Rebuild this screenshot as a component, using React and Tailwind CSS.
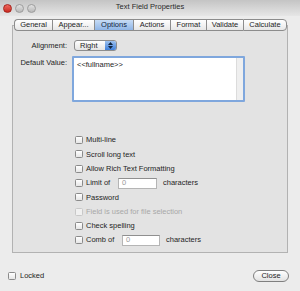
import React from "react";

const tabs = [
  { label: "General", w: "w-[38px]" },
  { label: "Appear...", w: "w-[42px]" },
  { label: "Options", w: "w-[39px]", active: true },
  { label: "Actions", w: "w-[37px]" },
  { label: "Format", w: "w-[36px]" },
  { label: "Validate", w: "w-[37px]" },
  { label: "Calculate", w: "w-[44px]" },
];

const Check = ({ disabled }) => (
  <span
    className={
      "block w-[8px] h-[8px] rounded-[1.5px] border shrink-0 " +
      (disabled
        ? "border-[#c8c8c8] bg-[#f0f0f0]"
        : "border-[#8a8a8a] bg-gradient-to-b from-[#ffffff] to-[#e6e6e6]")
    }
  />
);

const Row = ({ children, disabled }) => (
  <div className="flex items-center h-[14.3px] pl-[62px]">
    <Check disabled={disabled} />
    <div
      className={
        "ml-[3px] flex items-center " +
        (disabled ? "text-[#a8a8a8]" : "text-[#1e1e1e]")
      }
    >
      {children}
    </div>
  </div>
);

const NumField = ({ w }) => (
  <span
    className={
      "flex items-center h-[11px] px-[3px] bg-white border border-[#b5b5b5] border-t-[#8f8f8f] text-[#9a9a9a] " +
      w
    }
  >
    0
  </span>
);

export default function App() {
  return (
    <div
      className="w-[300px] h-[291px] bg-[#ececec] flex flex-col overflow-hidden text-[7.5px] leading-none text-[#1e1e1e]"
      style={{ fontFamily: '"Liberation Sans", Arial, sans-serif' }}
    >
      {/* title bar */}
      <div className="h-[16px] shrink-0 grid grid-cols-[1fr_auto_1fr] items-center px-[3px] bg-gradient-to-b from-[#c4c4c4] to-[#e6e6e6]">
        <div className="flex gap-[3px] items-center">
          <span className="block w-[9px] h-[9px] rounded-full bg-gradient-to-b from-[#f0675e] to-[#c9261d] border border-[#a5221b]" />
          <span className="block w-[9px] h-[9px] rounded-full bg-gradient-to-b from-[#e2e2e2] to-[#b8b8b8] border border-[#9c9c9c]" />
          <span className="block w-[9px] h-[9px] rounded-full bg-gradient-to-b from-[#e2e2e2] to-[#b8b8b8] border border-[#9c9c9c]" />
        </div>
        <div className="text-[7.5px] text-[#2a2a2a] -mt-[3px]">Text Field Properties</div>
        <div />
      </div>

      {/* tabs + panel */}
      <div className="px-[12px] pt-[3px] shrink-0">
        <div className="relative z-10 flex ml-[2px] h-[12px]">
          {tabs.map((t, i) => (
            <div
              key={t.label}
              className={
                "flex items-center justify-center border-y border-[#8c8c8c] " +
                t.w +
                (i === 0 ? " border-l rounded-l-[4px]" : " border-l") +
                (i === tabs.length - 1 ? " border-r rounded-r-[4px]" : "") +
                (t.active
                  ? " bg-gradient-to-b from-[#c7dcf5] to-[#8fb5e6] text-[#10243f]"
                  : " bg-gradient-to-b from-[#ffffff] to-[#e7e7e7]")
              }
            >
              {t.label}
            </div>
          ))}
        </div>
        <div className="-mt-[6px] h-[228px] border border-[#b2b2b2] bg-[#e3e3e3] flex flex-col">
          <div className="pt-[14px] flex items-center">
            <div className="w-[54px] text-right">Alignment:</div>
            <div className="ml-[7px] w-[43px] h-[11px] flex items-center rounded-[3px] border border-[#8d8d8d] bg-gradient-to-b from-[#ffffff] to-[#e4e4e4]">
              <span className="ml-[5px] flex-1">Right</span>
              <span className="w-[11px] h-full rounded-r-[2px] bg-gradient-to-b from-[#9cc1ef] to-[#3f7fd8] flex flex-col items-center justify-center gap-[1px]">
                <svg width="5" height="3" viewBox="0 0 5 3">
                  <path d="M0 3 L2.5 0 L5 3 Z" fill="#10243f" />
                </svg>
                <svg width="5" height="3" viewBox="0 0 5 3">
                  <path d="M0 0 L2.5 3 L5 0 Z" fill="#10243f" />
                </svg>
              </span>
            </div>
          </div>
          <div className="mt-[5px] flex items-start">
            <div className="w-[54px] text-right pt-[3px]">Default Value:</div>
            <div className="ml-[5px] w-[173px] h-[46px] border-[2px] border-[#7fa7dd] rounded-[1px] bg-white flex">
              <div className="flex-1 pl-[3px] pt-[3px]">&lt;&lt;fullname&gt;&gt;</div>
              <div className="w-[7px] bg-[#efefef] border-l border-[#dcdcdc]" />
            </div>
          </div>
          <div className="mt-[31px] flex flex-col">
            <Row>Multi-line</Row>
            <Row>Scroll long text</Row>
            <Row>Allow Rich Text Formatting</Row>
            <Row>
              <span className="w-[32px]">Limit of</span>
              <NumField w="w-[39px]" />
              <span className="ml-[6px]">characters</span>
            </Row>
            <Row>Password</Row>
            <Row disabled>Field is used for file selection</Row>
            <Row>Check spelling</Row>
            <Row>
              <span className="w-[36px]">Comb of</span>
              <NumField w="w-[38px]" />
              <span className="ml-[6px]">characters</span>
            </Row>
          </div>
        </div>
      </div>

      {/* bottom bar */}
      <div className="mt-[17px] flex items-center justify-between pl-[8px] pr-[11px]">
        <div className="flex items-center">
          <Check />
          <span className="ml-[4px]">Locked</span>
        </div>
        <button className="w-[36px] h-[12px] rounded-full border border-[#7f7f7f] bg-gradient-to-b from-[#ffffff] to-[#e2e2e2] flex items-center justify-center text-[7.5px] text-[#1e1e1e]">
          Close
        </button>
      </div>
    </div>
  );
}
